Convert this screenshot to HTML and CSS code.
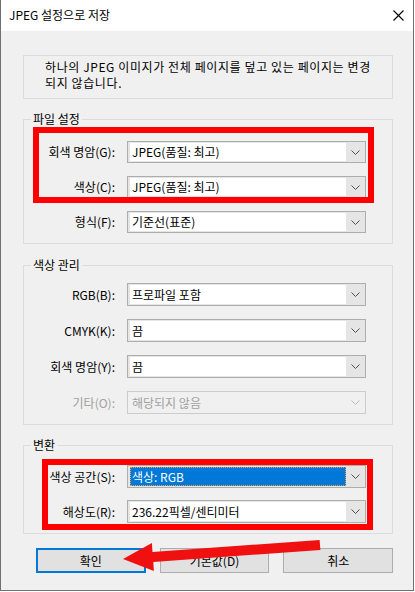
FILE: index.html
```html
<html>
    <head>
        <meta charset="utf-8">
        <link rel="stylesheet" href="styles.css">
    </head>
    <body>
        <div class="window">
            <div class="titlebar">
                <span class="title">JPEG 설정으로 저장</span>
                <svg class="close" width="11" height="11" viewBox="0 0 11 11"><path d="M0.5 0.5 L10.5 10.5 M10.5 0.5 L0.5 10.5" stroke="#000" stroke-width="1.1" fill="none"/></svg>
            </div>
            <div class="content">
                <div class="info">하나의 JPEG 이미지가 전체 페이지를 덮고 있는 페이지는 변경<br>되지 않습니다.</div>

                <div class="group group-file">
                    <div class="group-title">파일 설정</div>
                    <div class="rows">
                        <label>회색 명암(G):</label>
                        <div class="combo"><span class="combo-value">JPEG(품질: 최고)</span><span class="combo-btn"><svg width="9" height="5" viewBox="0 0 9 5"><path d="M0.5 0.5 L4.5 4.5 L8.5 0.5" stroke="#505050" fill="none"/></svg></span></div>
                        <label>색상(C):</label>
                        <div class="combo"><span class="combo-value">JPEG(품질: 최고)</span><span class="combo-btn"><svg width="9" height="5" viewBox="0 0 9 5"><path d="M0.5 0.5 L4.5 4.5 L8.5 0.5" stroke="#505050" fill="none"/></svg></span></div>
                        <label>형식(F):</label>
                        <div class="combo"><span class="combo-value">기준선(표준)</span><span class="combo-btn"><svg width="9" height="5" viewBox="0 0 9 5"><path d="M0.5 0.5 L4.5 4.5 L8.5 0.5" stroke="#505050" fill="none"/></svg></span></div>
                    </div>
                </div>

                <div class="group group-color">
                    <div class="group-title">색상 관리</div>
                    <div class="rows">
                        <label>RGB(B):</label>
                        <div class="combo"><span class="combo-value">프로파일 포함</span><span class="combo-btn"><svg width="9" height="5" viewBox="0 0 9 5"><path d="M0.5 0.5 L4.5 4.5 L8.5 0.5" stroke="#505050" fill="none"/></svg></span></div>
                        <label>CMYK(K):</label>
                        <div class="combo"><span class="combo-value">끔</span><span class="combo-btn"><svg width="9" height="5" viewBox="0 0 9 5"><path d="M0.5 0.5 L4.5 4.5 L8.5 0.5" stroke="#505050" fill="none"/></svg></span></div>
                        <label>회색 명암(Y):</label>
                        <div class="combo"><span class="combo-value">끔</span><span class="combo-btn"><svg width="9" height="5" viewBox="0 0 9 5"><path d="M0.5 0.5 L4.5 4.5 L8.5 0.5" stroke="#505050" fill="none"/></svg></span></div>
                        <label class="disabled">기타(O):</label>
                        <div class="combo combo-disabled"><span class="combo-value">해당되지 않음</span><span class="combo-btn"><svg width="9" height="5" viewBox="0 0 9 5"><path d="M0.5 0.5 L4.5 4.5 L8.5 0.5" stroke="#bdbdbd" fill="none"/></svg></span></div>
                    </div>
                </div>

                <div class="group group-convert">
                    <div class="group-title">변환</div>
                    <div class="rows">
                        <label>색상 공간(S):</label>
                        <div class="combo"><span class="combo-value selected">색상: RGB</span><span class="combo-btn"><svg width="9" height="5" viewBox="0 0 9 5"><path d="M0.5 0.5 L4.5 4.5 L8.5 0.5" stroke="#505050" fill="none"/></svg></span></div>
                        <label>해상도(R):</label>
                        <div class="combo"><span class="combo-value">236.22픽셀/센티미터</span><span class="combo-btn"><svg width="9" height="5" viewBox="0 0 9 5"><path d="M0.5 0.5 L4.5 4.5 L8.5 0.5" stroke="#505050" fill="none"/></svg></span></div>
                    </div>
                </div>

                <div class="buttons">
                    <div class="btn btn-default">확인</div>
                    <div class="btn">기본값(D)</div>
                    <div class="btn">취소</div>
                </div>
            </div>

            <!-- annotations drawn over the dialog -->
            <svg class="marks" width="415" height="592" viewBox="0 0 415 592">
                <rect x="36" y="130" width="335" height="70" fill="none" stroke="#ff0000" stroke-width="6"/>
                <rect x="45" y="462" width="325" height="65" fill="none" stroke="#ff0000" stroke-width="6"/>
                <polygon points="319.6,540 152.5,551.9 151.9,542.9 123,559 153.9,570.9 153.3,561.9 320.4,550" fill="#f01010"/>
            </svg>
        </div>
    </body>
</html>
```

FILE: styles.css
```css
body {
    margin: 0;
    background: #ffffff;
    font-family: "Noto Sans CJK KR", "Noto Sans", sans-serif;
    font-size: 12px;
    color: #000000;
}
.window {
    position: relative;
    width: 414px;
    height: 591px;
    box-sizing: border-box;
    border: 1px solid #707070;
    border-top: none;
    background: #f0f0f0;
}
.titlebar {
    height: 31px;
    background: #ffffff;
    display: flex;
    align-items: center;
    justify-content: space-between;
    padding: 0 9px 2px 8px;
    box-sizing: border-box;
}
.title {
    line-height: 14px;
}
.close {
    margin-top: 1px;
}
.content {
    padding: 24px 0 0 22px;
    width: 370px;
}
.info {
    height: 44px;
    box-sizing: border-box;
    border: 1px solid #dcdcdc;
    padding: 3px 0 0 21px;
    line-height: 16px;
    letter-spacing: 0.6px;
}
.group {
    border: 1px solid #dcdcdc;
    margin-top: 20px;
}
.group-title {
    width: fit-content;
    margin: -8px 0 0 7px;
    padding: 0 2px;
    line-height: 14px;
    background: #f0f0f0;
}
.rows {
    display: grid;
    grid-template-columns: 91px 239px;
    column-gap: 12px;
    align-items: center;
    padding-bottom: 10px;
}
.rows label {
    text-align: right;
    line-height: 14px;
}
.rows label.disabled {
    color: #a0a0a0;
}
.group-file .rows {
    margin-top: 15px;
    grid-auto-rows: 22px;
    row-gap: 13px;
}
.group-color {
    margin-top: 21px;
}
.group-color .rows {
    margin-top: 11px;
    grid-auto-rows: 23px;
    row-gap: 13px;
}
.group-convert .rows {
    margin-top: 13px;
    grid-auto-rows: 23px;
    row-gap: 12px;
}
.combo {
    display: flex;
    height: 100%;
    box-sizing: border-box;
    border: 1px solid #adadad;
    background: #e5e5e5;
    padding: 1px 0 1px 2px;
}
.combo-value {
    flex: 1;
    background: #ffffff;
    padding-left: 2px;
    display: flex;
    align-items: center;
    line-height: 14px;
}
.combo-value.selected {
    background: #0078d7;
    color: #ffffff;
    border: 1px dotted #f0a040;
    padding-left: 1px;
}
.combo-btn {
    width: 19px;
    display: flex;
    align-items: center;
    justify-content: center;
}
.combo-disabled {
    border-color: #cccccc;
    background: #f0f0f0;
}
.combo-disabled .combo-value {
    background: #f0f0f0;
    color: #a0a0a0;
}
.buttons {
    display: flex;
    gap: 14px;
    margin: 14px 0 0 13px;
}
.btn {
    width: 110px;
    height: 25px;
    box-sizing: border-box;
    border: 1px solid #adadad;
    background: #e1e1e1;
    display: flex;
    align-items: center;
    justify-content: center;
    line-height: 14px;
}
.btn-default {
    border: 2px solid #0078d7;
}
.marks {
    position: absolute;
    left: -1px;
    top: 0;
    pointer-events: none;
}
```
